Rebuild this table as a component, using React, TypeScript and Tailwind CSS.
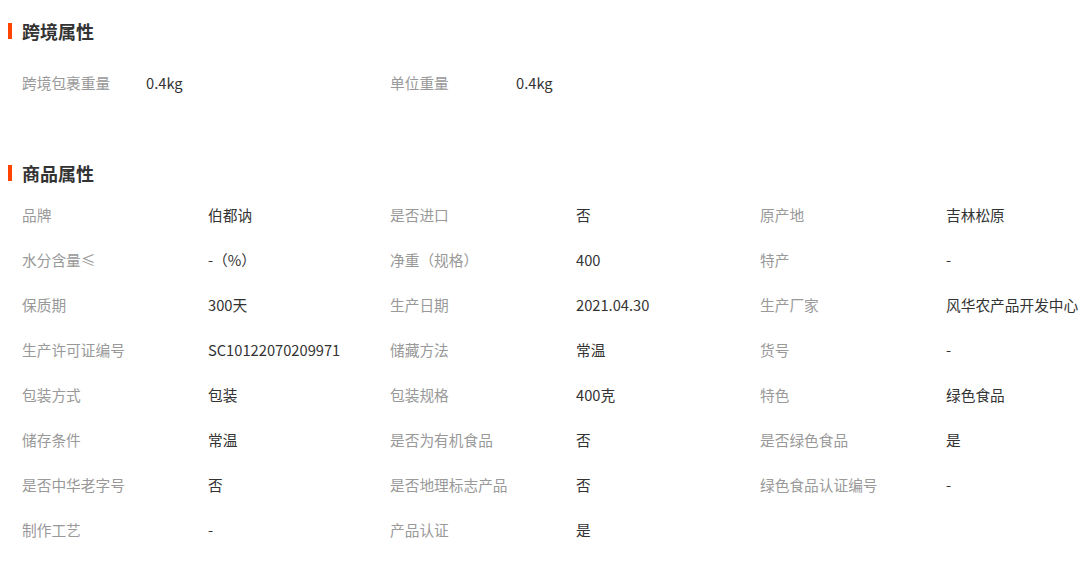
const font = { fontFamily: '"Microsoft YaHei", "Noto Sans CJK SC", sans-serif' }

const crossBorder = [
  ["跨境包裹重量", "0.4kg"],
  ["单位重量", "0.4kg"],
]

const attrs = [
  ["品牌", "伯都讷"],
  ["是否进口", "否"],
  ["原产地", "吉林松原"],
  ["水分含量≤", "-（%）"],
  ["净重（规格）", "400"],
  ["特产", "-"],
  ["保质期", "300天"],
  ["生产日期", "2021.04.30"],
  ["生产厂家", "风华农产品开发中心"],
  ["生产许可证编号", "SC10122070209971"],
  ["储藏方法", "常温"],
  ["货号", "-"],
  ["包装方式", "包装"],
  ["包装规格", "400克"],
  ["特色", "绿色食品"],
  ["储存条件", "常温"],
  ["是否为有机食品", "否"],
  ["是否绿色食品", "是"],
  ["是否中华老字号", "否"],
  ["是否地理标志产品", "否"],
  ["绿色食品认证编号", "-"],
  ["制作工艺", "-"],
  ["产品认证", "是"],
]

function Header({ title }: { title: string }) {
  return (
    <div className="flex items-center h-[40px] pl-[8px]">
      <span className="w-[4px] h-[16px] bg-[#ff4400]" />
      <span className="ml-[10px] text-[18px] font-bold text-[#333]">{title}</span>
    </div>
  )
}

export default function App() {
  return (
    <div className="w-[1092px] h-[564px] bg-white overflow-hidden pt-[11px] text-[14.7px]" style={font}>
      <Header title="跨境属性" />
      <div className="flex pl-[22px] mt-[10px]">
        {crossBorder.map(([k, v], i) => (
          <div key={k} className={`flex items-center h-[45px] ${i === 0 ? "w-[368px]" : "w-[370px]"}`}>
            <span className={`${i === 0 ? "w-[124px]" : "w-[126px]"} text-[#999]`}>{k}</span>
            <span className="text-[#333]">{v}</span>
          </div>
        ))}
      </div>

      <div className="mt-[47px]">
        <Header title="商品属性" />
        <div className="grid grid-cols-[368px_370px_1fr] pl-[22px]">
          {attrs.map(([k, v]) => (
            <div key={k} className="flex items-center h-[45px] whitespace-nowrap">
              <span className="w-[186px] shrink-0 text-[#999]">{k}</span>
              <span className="text-[#333]">{v}</span>
            </div>
          ))}
        </div>
      </div>
    </div>
  )
}
